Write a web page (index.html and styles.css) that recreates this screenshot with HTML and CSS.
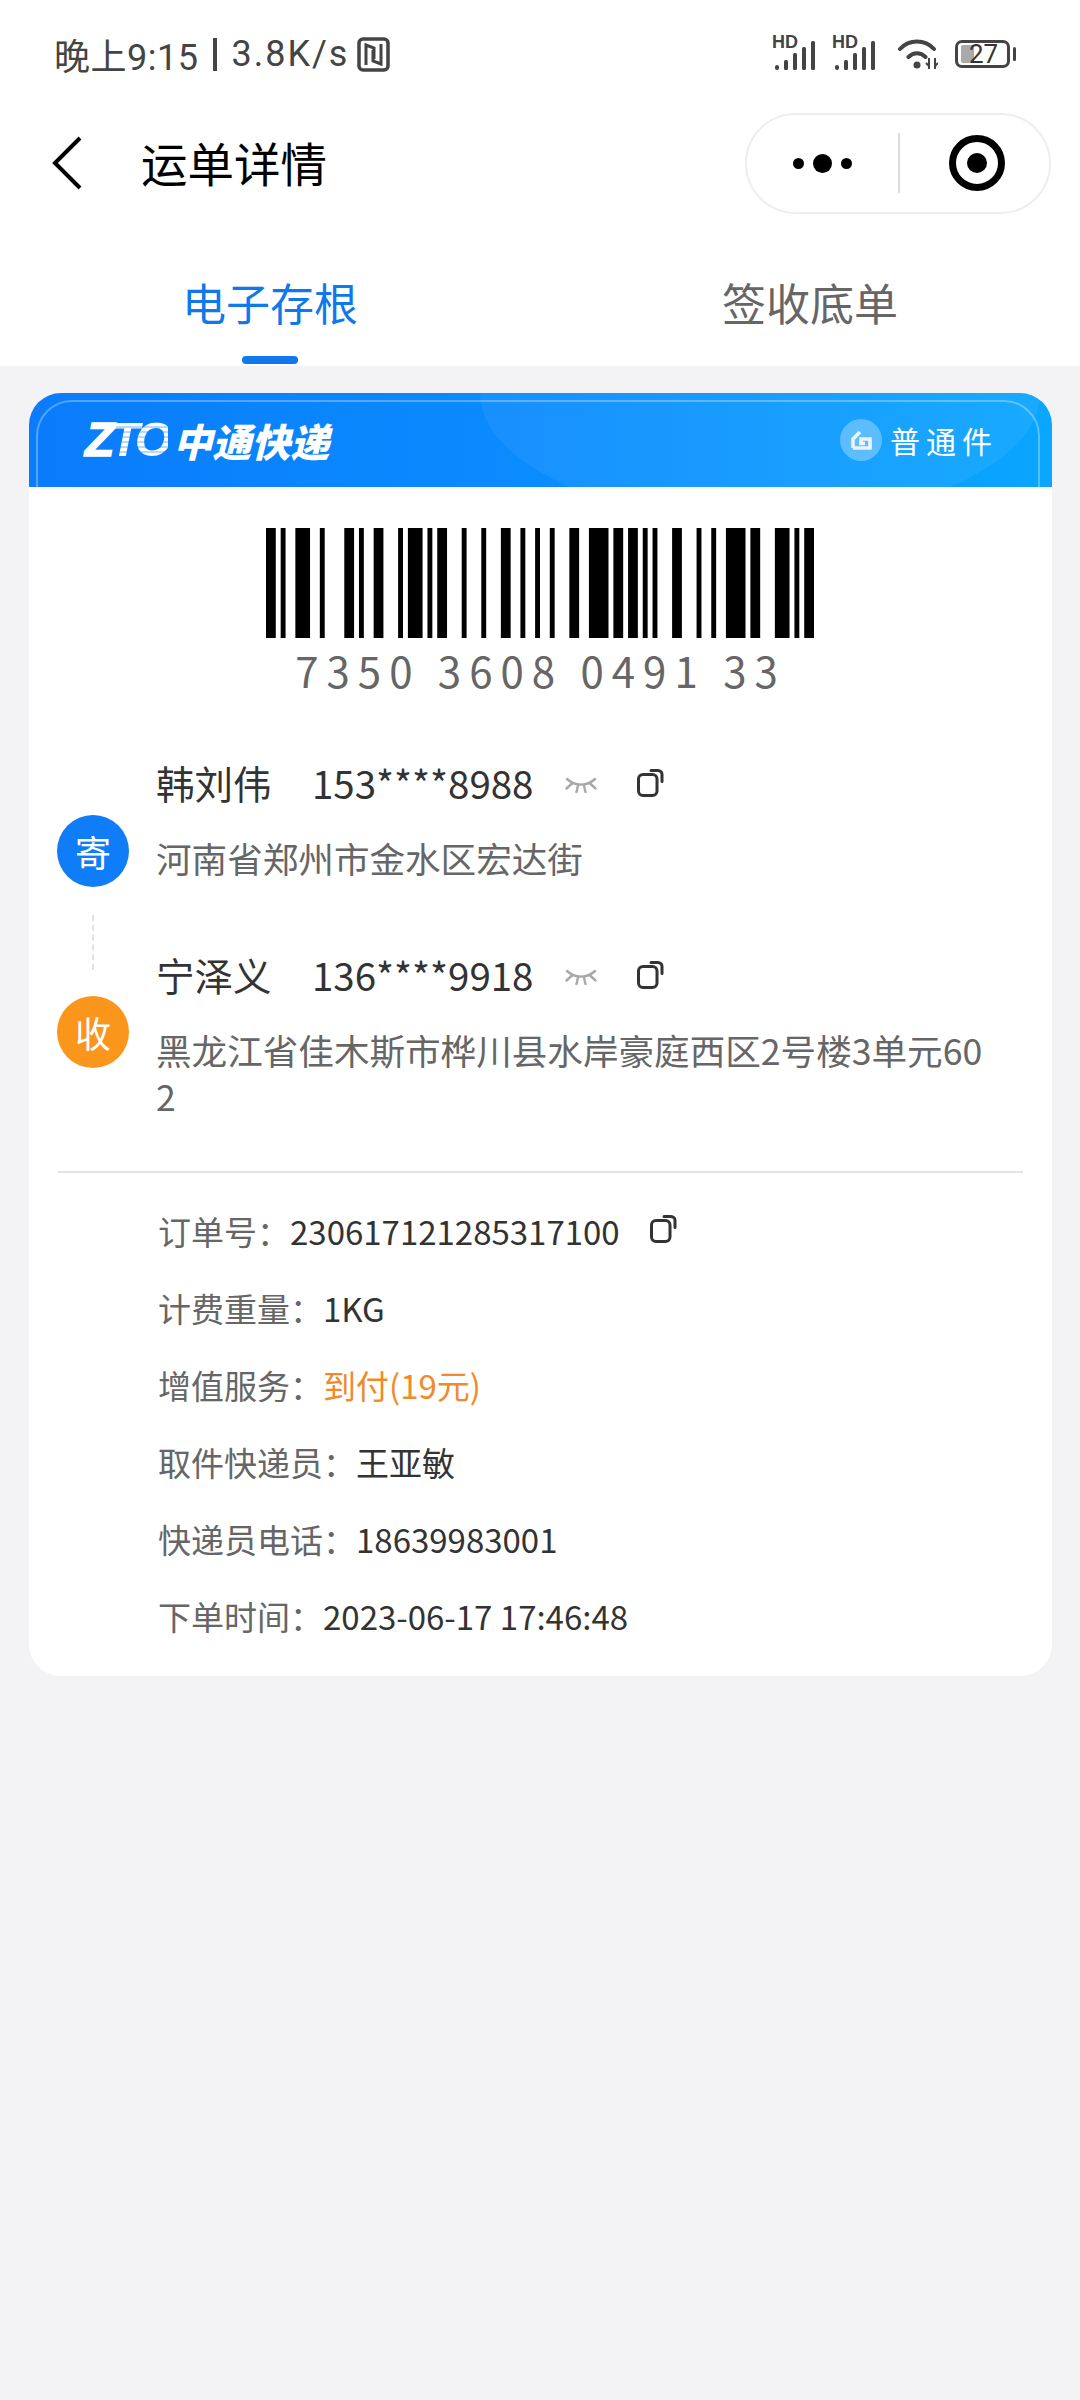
FILE: index.html
```html
<!DOCTYPE html>
<html lang="zh-CN">
<head>
<meta charset="utf-8">
<title>运单详情</title>
<link rel="stylesheet" href="styles.css">
</head>
<body>
<svg class="defs" width="0" height="0">
  <symbol id="copy" viewBox="0 0 27 29"><rect x="1.500" y="6.500" width="18.500" height="21" rx="4.500" fill="none" stroke="#333" stroke-width="3"/><path d="M14 2.500h7a4 4 0 0 1 4 4v7" fill="none" stroke="#333" stroke-width="3" stroke-linecap="round"/></symbol>
  <symbol id="eye" viewBox="0 0 34 16"><path d="M3 2c8 7.500 20 7.500 28 0M8 6.500 2.500 11.500M14 8.500 12.500 15M20 8.500 21.500 15M26 6.500 31.500 11.500" fill="none" stroke="#a9a9a9" stroke-width="2.400" stroke-linecap="round"/></symbol>
  <symbol id="signal" viewBox="0 0 44 31"><rect x="3" y="25" width="4" height="5" rx="2" fill="#444"/><rect x="12" y="20" width="4" height="10" rx="1.500" fill="#444"/><rect x="21" y="13" width="4" height="17" rx="1.500" fill="#444"/><rect x="30" y="7" width="4" height="23" rx="1.500" fill="#444"/><rect x="39" y="1" width="4" height="29" rx="1.500" fill="#444"/></symbol>
</svg>

<header class="status">
  <div class="status-left">
    <span>晚上9:15</span><i class="sep"></i><span class="speed">3.8K/s</span>
    <svg class="nfc" viewBox="0 0 33 35"><rect x="2" y="2" width="29" height="31" rx="4" fill="none" stroke="#444" stroke-width="3.500"/><path d="M9 28V8l8 3v11M24 7v20l-8-3V13" fill="none" stroke="#444" stroke-width="3"/></svg>
  </div>
  <div class="status-right">
    <span class="hd"><b>HD</b><svg class="sig" viewBox="0 0 44 31"><use href="#signal"/></svg></span>
    <span class="hd"><b>HD</b><svg class="sig" viewBox="0 0 44 31"><use href="#signal"/></svg></span>
    <svg class="wifi" viewBox="0 0 40 32"><path d="M2 11C11 1 27 1 36 11M10.500 19c5-5 12-5 17 0" fill="none" stroke="#444" stroke-width="4" stroke-linecap="round"/><circle cx="19" cy="27" r="3.500" fill="#444"/><path d="M31 20v11M37 20v11M28 25l3 3M40 25l-3 3" fill="none" stroke="#444" stroke-width="2"/></svg>
    <span class="battery"><i class="level"></i><span class="pct">27</span></span>
    <i class="tip"></i>
  </div>
</header>

<nav class="nav">
  <svg class="back" viewBox="0 0 31 56"><path d="M28 3 3 28l25 25" fill="none" stroke="#000" stroke-width="4"/></svg>
  <h1 class="title">运单详情</h1>
  <div class="capsule">
    <div class="more"><i class="dot"></i><i class="dot big"></i><i class="dot"></i></div>
    <i class="capsule-line"></i>
    <div class="target"><i class="target-in"></i></div>
  </div>
</nav>

<div class="tabs">
  <div class="tab on">电子存根<i class="bar"></i></div>
  <div class="tab">签收底单</div>
</div>

<main class="main">
  <section class="card">
    <div class="brand">
      <div class="logo"><span class="zto"><span class="z">Z</span><span class="to">TO</span></span><span class="cn">中通快递</span></div>
      <div class="kind">
        <span class="kind-icon"><svg viewBox="0 0 24 24"><path d="M4 20V11L11 4M4 20H21V11H12V15.500H16" fill="none" stroke="#eaf5ff" stroke-width="3.600"/></svg></span>
        <span class="kind-text">普通件</span>
      </div>
    </div>

    <div class="barcode">
      <svg class="bars" viewBox="0 0 112 1" preserveAspectRatio="none">
        <path d="M0 0h2v1H0zM3 0h1v1H3zM6 0h3v1H6zM11 0h1v1h-1zM16 0h2v1h-2zM19 0h1v1h-1zM22 0h2v1h-2zM27 0h1v1h-1zM29 0h3v1h-3zM33 0h1v1h-1zM35 0h2v1h-2zM40 0h1v1h-1zM44 0h1v1h-1zM48 0h2v1h-2zM52 0h1v1h-1zM55 0h1v1h-1zM58 0h1v1h-1zM62 0h2v1h-2zM66 0h4v1h-4zM71 0h2v1h-2zM74 0h2v1h-2zM77 0h1v1h-1zM79 0h1v1h-1zM83 0h2v1h-2zM88 0h1v1h-1zM91 0h1v1h-1zM94 0h4v1h-4zM99 0h2v1h-2zM104 0h3v1h-3zM108 0h1v1h-1zM110 0h2v1h-2z" fill="#000"/>
      </svg>
      <div class="code">7350 3608 0491 33</div>
    </div>

    <div class="route">
      <div class="marks">
        <span class="mark send">寄</span>
        <i class="dash"></i>
        <span class="mark recv">收</span>
      </div>
      <div class="people">
        <div class="person">
          <div class="who"><span class="name">韩刘伟</span><span class="phone">153****8988</span><svg class="eye"><use href="#eye"/></svg><svg class="copy"><use href="#copy"/></svg></div>
          <p class="addr">河南省郑州市金水区宏达街</p>
        </div>
        <div class="person second">
          <div class="who"><span class="name">宁泽义</span><span class="phone">136****9918</span><svg class="eye"><use href="#eye"/></svg><svg class="copy"><use href="#copy"/></svg></div>
          <p class="addr">黑龙江省佳木斯市桦川县水岸豪庭西区2号楼3单元602</p>
        </div>
      </div>
    </div>

    <hr class="rule">

    <div class="details">
      <div class="row"><span class="k">订单号：</span><span class="v">230617121285317100</span><svg class="copy order"><use href="#copy"/></svg></div>
      <div class="row"><span class="k">计费重量：</span><span class="v">1KG</span></div>
      <div class="row"><span class="k">增值服务：</span><span class="v orange">到付(19元)</span></div>
      <div class="row"><span class="k">取件快递员：</span><span class="v">王亚敏</span></div>
      <div class="row"><span class="k">快递员电话：</span><span class="v">18639983001</span></div>
      <div class="row"><span class="k">下单时间：</span><span class="v">2023-06-17 17:46:48</span></div>
    </div>
  </section>
</main>
</body>
</html>
```

FILE: styles.css
```css
* { box-sizing: border-box; }
html, body { margin: 0; padding: 0; }
body {
  width: 1080px;
  height: 2400px;
  background: #f3f3f6;
  font-family: "Noto Sans CJK SC", "Noto Sans", sans-serif;
  overflow: hidden;
}
i { display: block; }
.defs { position: absolute; }

.status {
  height: 108px;
  background: #fff;
  padding: 0 64px 0 54px;
  display: flex;
  align-items: center;
  justify-content: space-between;
}
.status-left {
  display: flex;
  align-items: center;
  font-family: Roboto, "Noto Sans CJK SC", sans-serif;
  font-size: 36px;
  color: #444;
  letter-spacing: .5px;
}
.speed { letter-spacing: 2px; }
.sep { width: 4px; height: 33px; background: #444; margin: 0 14px 0 15px; }
.nfc { width: 33px; height: 35px; margin-left: 8px; }
.status-right { display: flex; align-items: center; height: 36px; }
.hd { position: relative; display: block; width: 44px; height: 31px; margin-right: 16px; top: 1px; }
.hd b {
  position: absolute;
  left: 0;
  top: -7px;
  font: 700 18px/18px "Liberation Sans", sans-serif;
  color: #444;
}
.sig { display: block; width: 44px; height: 31px; }
.wifi { width: 40px; height: 32px; margin: 0 17px 0 6px; }
.battery {
  position: relative;
  width: 55px;
  height: 28px;
  border: 3px solid #444;
  border-radius: 7px;
  display: block;
}
.level { position: absolute; left: 3px; top: 2px; width: 13px; height: 18px; background: #aaa; border-radius: 2px; }
.pct {
  position: absolute;
  left: 11px;
  top: -5px;
  font: 400 26px/32px Roboto, sans-serif;
  color: #333;
}
.tip { width: 3px; height: 14px; background: #444; margin-left: 3px; border-radius: 2px; }

.nav {
  height: 110px;
  background: #fff;
  display: flex;
  align-items: center;
  padding: 0 29px 0 52px;
}
.back { width: 31px; height: 56px; }
.title {
  margin: -3px 0 0 58px;
  font-size: 46.500px;
  line-height: 60px;
  font-weight: 400;
  color: #000;
  flex: 1;
}
.capsule {
  width: 306px;
  height: 101px;
  border: 2px solid #eee;
  border-radius: 51px;
  display: flex;
  align-items: center;
}
.more { width: 151px; display: flex; align-items: center; justify-content: center; gap: 9px; }
.dot { width: 11px; height: 11px; border-radius: 50%; background: #000; }
.dot.big { width: 19px; height: 19px; }
.capsule-line { width: 2px; height: 60px; background: #ddd; }
.target {
  width: 56px;
  height: 56px;
  margin-left: 49px;
  border: 7px solid #000;
  border-radius: 50%;
  display: flex;
  align-items: center;
  justify-content: center;
}
.target-in { width: 20px; height: 20px; border-radius: 50%; background: #000; }

.tabs { height: 148px; background: #fff; display: flex; }
.tab {
  position: relative;
  flex: 1;
  text-align: center;
  font-size: 44px;
  line-height: 60px;
  padding-top: 54px;
  color: #666;
}
.tab.on { color: #0f78ea; }
.bar {
  position: absolute;
  left: 50%;
  bottom: 2px;
  width: 56px;
  height: 8px;
  margin-left: -28px;
  border-radius: 4px;
  background: #0f78ea;
}

.main { padding: 27px 28px 0 29px; }
.card {
  background: #fff;
  border-radius: 32px;
  overflow: hidden;
  height: 1283px;
}
.brand {
  position: relative;
  height: 94px;
  overflow: hidden;
  display: flex;
  align-items: center;
  justify-content: space-between;
  padding: 0 60px 0 56px;
  background: linear-gradient(90deg, #0a7cfb 0%, #0a8cff 50%, #0aa6ff 100%);
  color: #fff;
}
.brand::before {
  content: "";
  position: absolute;
  left: 451px;
  top: -128px;
  width: 560px;
  height: 256px;
  border-radius: 50%;
  background: rgba(255, 255, 255, .06);
}
.brand::after {
  content: "";
  position: absolute;
  left: 7px;
  right: 12px;
  top: 7px;
  height: 120px;
  border: 2px solid rgba(255, 255, 255, .3);
  border-radius: 36px;
}
.logo { position: relative; display: flex; align-items: center; font-style: italic; font-weight: 700; }
.zto {
  font: italic 700 48px/48px "Liberation Sans", sans-serif;
  letter-spacing: -4px;
  margin-right: 5px;
}
.z { -webkit-text-stroke: 1.500px #fff; }
.to {
  background: repeating-linear-gradient(180deg, #fff 0 3px, rgba(255, 255, 255, .7) 3px 5px);
  -webkit-background-clip: text;
  background-clip: text;
  color: transparent;
}
.cn { font-size: 39px; line-height: 48px; font-weight: 900; letter-spacing: 0; }
.kind { position: relative; display: flex; align-items: center; }
.kind-icon {
  width: 42px;
  height: 42px;
  border-radius: 50%;
  background: rgba(255, 255, 255, .3);
  display: flex;
  align-items: center;
  justify-content: center;
  margin-right: 8px;
}
.kind-icon svg { width: 24px; height: 24px; }
.kind-text { font-size: 30px; line-height: 42px; letter-spacing: 6px; margin-right: -6px; }

.barcode { padding-top: 41px; }
.bars { display: block; width: 548px; height: 110px; margin: 0 0 0 237px; }
.code {
  margin-top: 7px;
  text-align: center;
  font-family: "Noto Sans CJK SC", sans-serif;
  font-size: 42px;
  line-height: 50px;
  font-weight: 400;
  letter-spacing: 8px;
  color: #666;
}

.route { display: flex; margin-top: 57px; }
.marks { width: 127px; padding: 63px 0 0 28px; }
.mark {
  display: flex;
  align-items: center;
  justify-content: center;
  width: 72px;
  height: 72px;
  border-radius: 50%;
  color: #fff;
  font-size: 36px;
}
.send { background: #0f7cf8; }
.recv { background: #fa961c; }
.dash { width: 0; height: 55px; margin: 28px 0 26px 35px; border-left: 2px dashed #e2e2e2; }
.people { width: 838px; }
.who { display: flex; align-items: center; height: 60px; color: #333; font-size: 38.500px; }
.name { width: 156px; }
.eye { width: 34px; height: 16px; margin: 0 0 0 30px; position: relative; top: 3px; }
.copy { width: 27px; height: 29px; margin: 0 0 0 39px; position: relative; top: 0; }
.addr {
  margin: 23px 0 0;
  font-size: 35.600px;
  line-height: 46px;
  color: #666;
  word-break: break-all;
}
.second { margin-top: 63px; }

.rule { margin: 52px 29px 0 29px; border: 0; height: 2px; background: #e4e4e4; }
.details { padding: 19px 0 0 129px; }
.row { display: flex; align-items: center; height: 77px; font-size: 33px; }
.k { color: #666; }
.v { color: #333; }
.orange { color: #f08a2c; }
.copy.order { margin-left: 30px; top: -2px; }
```
